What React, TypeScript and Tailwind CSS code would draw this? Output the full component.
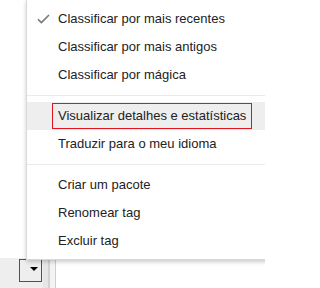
const items = [
  { label: "Classificar por mais recentes", checked: true },
  { label: "Classificar por mais antigos" },
  { label: "Classificar por mágica" },
  { sep: true },
  { label: "Visualizar detalhes e estatísticas", active: true },
  { label: "Traduzir para o meu idioma" },
  { sep: true },
  { label: "Criar um pacote" },
  { label: "Renomear tag" },
  { label: "Excluir tag" },
];

const App = () => {
  return (
    <div className="relative w-[265px] h-[288px] overflow-hidden bg-white font-['Liberation_Sans',Arial,sans-serif]">
      {/* bottom toolbar */}
      <div className="flex h-[30px] mt-[258px]">
        <div className="w-[43px] bg-[#eeeeee] pl-[19px] pt-[1px]">
          <div className="w-[23px] h-[23px] border border-[#e0141e] pl-[10px] pt-[7px]">
            <div className="w-0 h-0 border-l-[4px] border-r-[4px] border-t-[4px] border-l-transparent border-r-transparent border-t-black" />
          </div>
        </div>
        <div className="w-[5px] bg-[#e6e6e6]" />
        <div className="w-[2px] bg-[#d2d2d2]" />
        <div className="w-[5px] bg-[#f3f3f3]" />
        <div className="w-[1px] bg-[#cfcfcf]" />
      </div>

      {/* dropdown menu */}
      <div className="absolute left-[26px] top-0 w-[270px] h-[260px] bg-white border-l border-b border-[#d9d9d9] shadow-[0_2px_4px_rgba(0,0,0,0.2)] pt-[5px] text-[13px] text-[#222]">
        {items.map((it, i) =>
          it.sep ? (
            <div key={i} className="py-[6px]">
              <div className="h-px bg-[#ebebeb]" />
            </div>
          ) : (
            <div
              key={i}
              className={`flex items-center h-[28px] ${it.active ? "bg-[#eeeeee]" : ""}`}
            >
              <div className="w-[31px] pl-[10px] flex items-center">
                {it.checked && (
                  <svg width="13" height="10" viewBox="0 0 13 10">
                    <path d="M1 5.2 L4.4 8.6 L12 1" fill="none" stroke="#777" strokeWidth="1.6" />
                  </svg>
                )}
              </div>
              {it.active ? (
                <span className="ml-[-6px] h-[26px] mt-[-1px] flex items-center px-[5px] border border-[#e0141e] whitespace-nowrap">
                  {it.label}
                </span>
              ) : (
                <span className="whitespace-nowrap">{it.label}</span>
              )}
            </div>
          )
        )}
      </div>
    </div>
  );
};

export default App;
